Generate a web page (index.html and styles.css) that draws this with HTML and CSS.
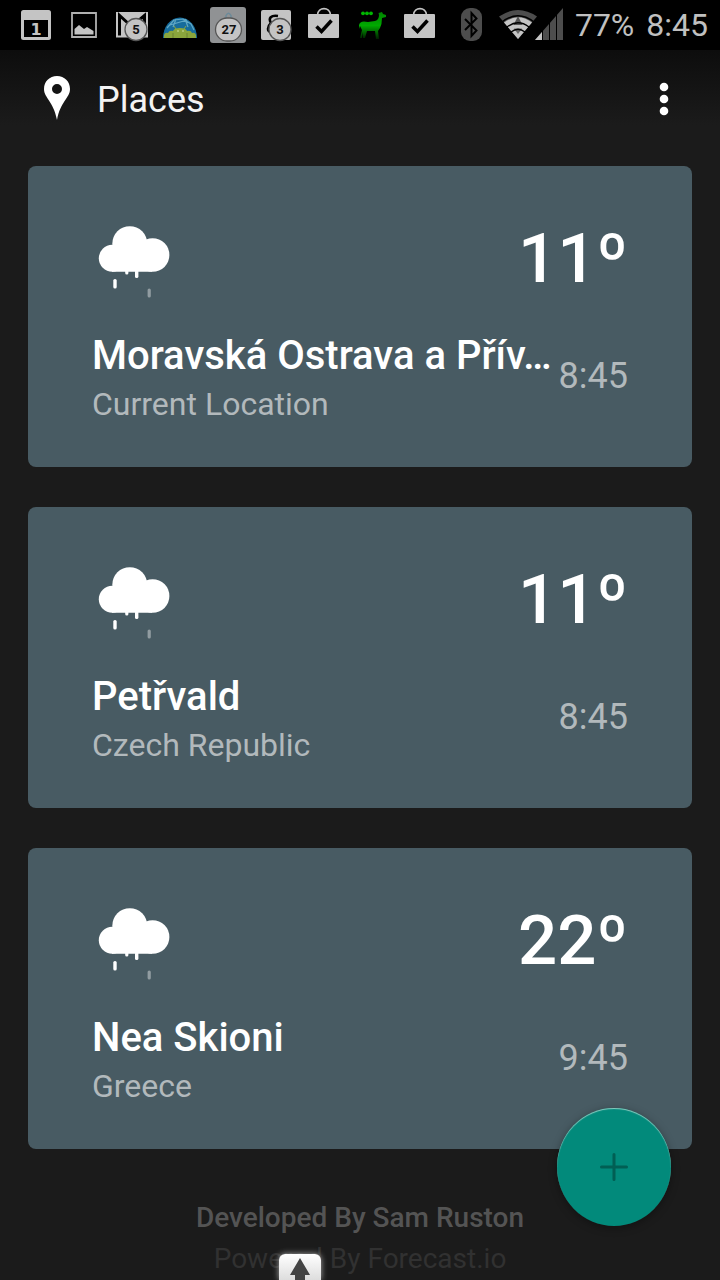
FILE: index.html
```html
<!DOCTYPE html>
<html lang="en">
<head>
<meta charset="utf-8">
<meta name="viewport" content="width=device-width, initial-scale=1">
<title>Places</title>
<link rel="stylesheet" href="styles.css">
</head>
<body>
<svg class="defs" aria-hidden="true">
  <symbol id="rain" viewBox="0 0 80 80">
    <circle cx="37.800" cy="25.700" r="17.500"/>
    <circle cx="20.300" cy="40.300" r="13.500"/>
    <circle cx="60.600" cy="37" r="16.800"/>
    <path d="M20 32H60V53.800H20Z"/>
    <rect x="21.300" y="61" width="3.400" height="9.500" rx="1.600"/>
    <rect x="33.200" y="52" width="3.200" height="4.600" rx="1.500"/>
    <rect x="43" y="52" width="3.400" height="8" rx="1.600"/>
    <rect x="55.600" y="70.500" width="3.200" height="9" rx="1.600" opacity=".4"/>
  </symbol>
  <symbol id="bag" viewBox="0 0 48 50">
    <path d="M17.500 15C18 6.500 30 6.500 30.500 15" fill="none" stroke="#c4c4c4" stroke-width="1.600"/>
    <rect x="8" y="14" width="31" height="24" rx="1" fill="#c4c4c4"/>
    <path d="M16.500 26.500L21.500 31.500L31.500 20.500" fill="none" stroke="#000" stroke-width="3.500"/>
  </symbol>
</svg>

<div class="status">
  <div class="notices">
    <svg class="notice" viewBox="0 0 48 50"><rect x="9" y="10" width="30" height="30" rx="2.500" fill="#c4c4c4"/><path d="M12 20H36V37H12Z" fill="#000"/><text class="day" x="24" y="35">1</text></svg>
    <svg class="notice" viewBox="0 0 48 50"><path d="M12 13H36V37H12Z" fill="#000" stroke="#b0b0b0" stroke-width="1.800"/><path d="M14.500 34.500V29L19 25L24 29L27 27L33.500 31V34.500Z" fill="#c4c4c4"/></svg>
    <svg class="notice" viewBox="0 0 48 50"><rect x="8" y="12" width="32" height="25.500" fill="#c4c4c4"/><path d="M11.500 35.500V15.500L22 25M36.500 35.500V15.500L30 21" fill="none" stroke="#000" stroke-width="3"/><circle cx="28" cy="29.500" r="11" fill="#c4c4c4" stroke="#555" stroke-width="1.300"/><text class="count" x="28" y="34">5</text></svg>
    <svg class="notice" viewBox="0 0 48 50"><path d="M7 38A17 20.500 0 0 1 41 38Z" fill="#176c9c"/><path d="M11 28L18 20L27 19L35 24L38 30M14 25L31 20M20 19L17 27M29 19L32 27" fill="none" stroke="#60a8c6" stroke-width="1.200"/><path d="M8 38V35Q9 32 12 33Q13 30 17 31Q18 28 24 28Q30 28 31 31Q35 30 36 33Q39 32 40 35V38Z" fill="#8ba63c"/><path d="M20 29L18 26M28 29L30 26" stroke="#8ba63c" stroke-width="1"/><circle cx="22" cy="31" r=".8" fill="#d6e5ae"/><circle cx="27" cy="31" r=".8" fill="#d6e5ae"/><path d="M17 33V38M31 33V38" stroke="#6a8430"/></svg>
    <svg class="notice" viewBox="0 0 48 50"><rect x="6" y="7" width="36" height="36" rx="3" fill="#909294"/><path d="M22 18V15.500Q24.500 11 27 15.500V18" fill="none" stroke="#6c8a99" stroke-width="1.500"/><rect x="11.500" y="18" width="26" height="23" rx="11.500" fill="#c4c4c4" stroke="#555" stroke-width="1.300"/><text class="count" x="25" y="34">27</text></svg>
    <svg class="notice" viewBox="0 0 48 50"><rect x="9" y="10" width="30" height="30" rx="2" fill="#c4c4c4"/><path d="M26 16C19 15 16 18 19 23C15 27 15 31 19 32" fill="none" stroke="#000" stroke-width="2.600"/><circle cx="28" cy="29.500" r="11" fill="#c4c4c4" stroke="#555" stroke-width="1.300"/><text class="count" x="28" y="34">3</text></svg>
    <svg class="notice"><use href="#bag"/></svg>
    <svg class="notice" viewBox="0 0 48 50"><defs><linearGradient id="llama" x2="0" y2="1"><stop stop-color="#008400"/><stop offset=".5" stop-color="#00aa00"/><stop offset="1" stop-color="#001d00"/></linearGradient></defs><path d="M11 25Q12 20 20 22L27 21Q31 20 31 15L30.500 13L34 12L35 14L38 15V17L34 18Q34 24 32 28L30 31L31 39H28L27 31H19L17 38H15V32L14 38H12L14 30L12 26L11 29Z" fill="url(#llama)"/><g fill="#00b800"><circle cx="15" cy="13.300" r="1.900"/><circle cx="19" cy="13.300" r="1.900"/><circle cx="23" cy="13.300" r="1.900"/></g></svg>
    <svg class="notice"><use href="#bag"/></svg>
  </div>
  <div class="system">
    <svg class="radio" viewBox="0 0 104 50">
      <rect x="2" y="8" width="21" height="33" rx="9" fill="#4d4d4d"/>
      <path d="M6 19L17.500 30.500L12.500 36V13L17.500 18.500L6 30" fill="none" stroke="#000" stroke-width="2"/>
      <path d="M40 16.500Q59 3.500 78 16.500L59 39Z" fill="#4d4d4d"/>
      <path d="M45 22.500Q59 12 73 22.500L59 39Z" fill="#c4c4c4"/>
      <path d="M59 16L63.500 25H54.500Z" fill="#555"/>
      <path d="M55 28.500H63L59 34Z" fill="#666"/>
      <path d="M43 22Q59 9.500 75 22M48 27Q59 18.500 70 27M52 32Q59 26.500 66 32" fill="none" stroke="#000" stroke-width="1.300"/>
      <path d="M76 40L104 8V40Z" fill="#4d4d4d"/><path d="M76 40L83 32V40Z" fill="#c4c4c4"/>
      <path d="M83.500 30V40M90.500 20V40M97.500 14V40" stroke="#000" stroke-width="1"/>
    </svg>
    <span>77%</span>
    <time>8:45</time>
  </div>
</div>

<header class="appbar">
  <svg class="pin" viewBox="0 0 26 44" aria-hidden="true"><path fill-rule="evenodd" d="M13 0C5.500 0 0 5.500 0 13C0 22 9.500 25 13 44C16.500 25 26 22 26 13C26 5.500 20.500 0 13 0ZM13 8A5 5 0 1 1 13 18A5 5 0 1 1 13 8Z"/></svg>
  <h1 class="title">Places</h1>
  <button class="more" aria-label="More options"><svg viewBox="0 0 10 34"><circle cx="5" cy="5" r="4.300"/><circle cx="5" cy="17" r="4.300"/><circle cx="5" cy="29" r="4.300"/></svg></button>
</header>

<main class="places">
  <article class="card">
    <div class="weather"><svg class="cloud" aria-label="Rain"><use href="#rain"/></svg><span class="temp">11º</span></div>
    <div class="details"><div class="place"><h2 class="name">Moravská Ostrava a Přív…</h2><p class="region">Current Location</p></div><time class="time">8:45</time></div>
  </article>
  <article class="card">
    <div class="weather"><svg class="cloud" aria-label="Rain"><use href="#rain"/></svg><span class="temp">11º</span></div>
    <div class="details"><div class="place"><h2 class="name">Petřvald</h2><p class="region">Czech Republic</p></div><time class="time">8:45</time></div>
  </article>
  <article class="card">
    <div class="weather"><svg class="cloud" aria-label="Rain"><use href="#rain"/></svg><span class="temp">22º</span></div>
    <div class="details"><div class="place"><h2 class="name">Nea Skioni</h2><p class="region">Greece</p></div><time class="time">9:45</time></div>
  </article>
</main>

<footer class="credits">
  <p class="developer">Developed By Sam Ruston</p>
  <p class="provider">Powered By Forecast.io</p>
</footer>

<button class="add" aria-label="Add place"><svg viewBox="0 0 28 28"><path d="M14 1.500V26.500M1.500 14H26.500"/></svg></button>
<button class="pull" aria-label="Show navigation"><svg viewBox="0 0 20 22"><path d="M10 0L20 17H15V22H5V17H0Z"/></svg></button>
</body>
</html>
```
FILE: styles.css
```css
* { box-sizing: border-box; }

body {
  margin: 0;
  background: #1b1b1b;
  color: #fff;
  font-family: Roboto, "Noto Sans", sans-serif;
}

h1, h2, p { margin: 0; }

button {
  padding: 0;
  border: 0;
  background: none;
  cursor: pointer;
}

.defs {
  position: absolute;
  width: 0;
  height: 0;
}

.status {
  display: flex;
  justify-content: space-between;
  height: 50px;
  padding: 0 12px;
  background: #000;
}

.notices { display: flex; }

.notice {
  width: 48px;
  height: 50px;
}

.day, .count {
  font-weight: 700;
  text-anchor: middle;
}

.day {
  fill: #c4c4c4;
  font-family: "DejaVu Sans", sans-serif;
  font-size: 16px;
}

.count {
  fill: #111;
  font-size: 13px;
}

.system {
  display: flex;
  align-items: center;
  gap: 12px;
  color: #c0c0c0;
  font-size: 32px;
  line-height: 52px;
}

.radio {
  width: 104px;
  height: 50px;
}

.appbar {
  display: flex;
  align-items: center;
  height: 100px;
  padding: 0 44px;
  background: linear-gradient(#0d0d0d, #1b1b1b 75%);
}

.pin {
  width: 26px;
  height: 44px;
  margin-bottom: 4px;
  fill: #fff;
}

.title {
  flex: 1;
  margin-left: 27px;
  color: #f3f3f3;
  font-size: 36px;
  font-weight: 400;
}

.more {
  width: 24px;
  height: 48px;
  margin-bottom: 2px;
}

.more svg {
  display: block;
  width: 10px;
  height: 34px;
  margin: 0 auto;
  fill: #fff;
}

.places {
  display: grid;
  gap: 40px;
  padding: 16px 28px 0;
}

.card {
  min-width: 0;
  padding: 52px 64px 40px;
  border-radius: 8px;
  background: #485b63;
}

.weather {
  display: flex;
  justify-content: space-between;
  margin-bottom: 31px;
}

.cloud {
  width: 80px;
  height: 80px;
  fill: #fff;
}

.temp {
  font-size: 69px;
  font-weight: 500;
  line-height: 82px;
}

.details {
  display: flex;
  justify-content: space-between;
}

.place { min-width: 0; }

.name {
  overflow: hidden;
  font-size: 40px;
  font-weight: 500;
  line-height: 50px;
  text-overflow: ellipsis;
  white-space: nowrap;
}

.region {
  color: #b2b9bc;
  font-size: 32px;
  line-height: 46px;
}

.time {
  color: #b2b9bc;
  font-size: 36px;
  line-height: 90px;
}

.credits {
  padding-top: 48px;
  font-size: 28px;
  line-height: 41px;
  text-align: center;
}

.developer {
  color: #545454;
  font-weight: 500;
}

.provider { color: #313131; }

.add {
  position: fixed;
  right: 49px;
  bottom: 54px;
  display: grid;
  place-items: center;
  width: 114px;
  height: 118px;
  border-radius: 50%;
  background: #028a7b;
  box-shadow: inset 0 1px 1px #8dcac0, 0 2px 8px rgba(0, 0, 0, .35);
}

.add svg {
  width: 28px;
  height: 28px;
  fill: none;
  stroke: #015f54;
  stroke-width: 3;
  stroke-linecap: round;
}

.pull {
  position: fixed;
  bottom: 0;
  left: calc(50% - 81px);
  display: grid;
  place-items: end center;
  width: 42px;
  height: 26px;
  border-radius: 6px 6px 0 0;
  background: linear-gradient(#fff, #ddd);
  box-shadow: 0 0 6px #aaa;
}

.pull svg {
  width: 20px;
  height: 22px;
  fill: #444;
}
```
